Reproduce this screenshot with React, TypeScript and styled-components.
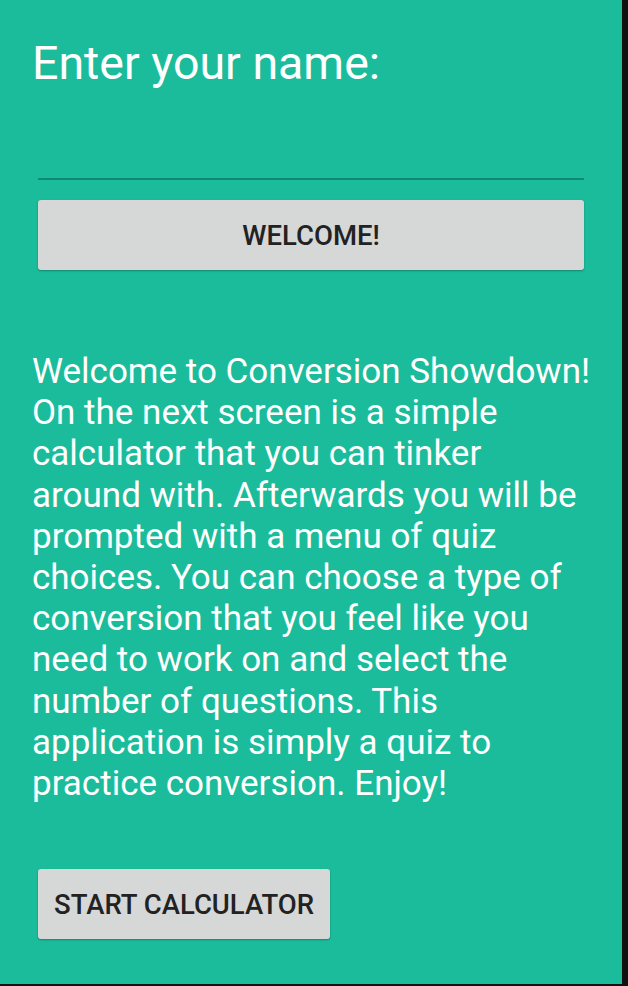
import React from "react";
import styled, { createGlobalStyle } from "styled-components";

const Global = createGlobalStyle`
  html, body { margin: 0; padding: 0; background: #111111; }
  body { font-family: Roboto, "Noto Sans", sans-serif; }
`;

const Screen = styled.div`
  width: 622px;
  height: 984px;
  background: #1bbc9b;
  box-sizing: border-box;
  padding: 0 32px;
  display: flex;
  flex-direction: column;
  align-items: flex-start;
`;

const Title = styled.h1`
  margin: 36px 0 0;
  font-size: 46.5px;
  line-height: 55px;
  font-weight: 400;
  color: #ffffff;
`;

const NameInput = styled.input`
  align-self: stretch;
  margin: 0 6px;
  height: 89px;
  box-sizing: border-box;
  border: none;
  border-bottom: 2px solid #0e8a74;
  background: transparent;
  outline: none;
  font-family: inherit;
  font-size: 36px;
  color: #ffffff;
`;

const Button = styled.button<{ $full?: boolean; $top: number }>`
  align-self: ${(p) => (p.$full ? "stretch" : "flex-start")};
  margin: ${(p) => p.$top}px 6px 0;
  height: 70px;
  padding: 0 16px;
  background: #d6d7d7;
  border: none;
  border-radius: 3px;
  box-shadow: 0 1px 2px rgba(0, 0, 0, 0.3);
  font-family: Roboto, sans-serif;
  font-weight: 500;
  font-size: 27.5px;
  color: #222222;
  text-transform: uppercase;
`;

const Body = styled.p`
  margin: 81px 0 0;
  font-size: 35px;
  line-height: 41.2px;
  color: #ffffff;
`;

export default function App() {
  return (
    <>
      <Global />
      <Screen>
        <Title>Enter your name:</Title>
        <NameInput type="text" />
        <Button $full $top={20}>WELCOME!</Button>
        <Body>
          Welcome to Conversion Showdown!
          <br />
          On the next screen is a simple
          <br />
          calculator that you can tinker
          <br />
          around with. Afterwards you will be
          <br />
          prompted with a menu of quiz
          <br />
          choices. You can choose a type of
          <br />
          conversion that you feel like you
          <br />
          need to work on and select the
          <br />
          number of questions. This
          <br />
          application is simply a quiz to
          <br />
          practice conversion. Enjoy!
        </Body>
        <Button $top={65}>START CALCULATOR</Button>
      </Screen>
    </>
  );
}
